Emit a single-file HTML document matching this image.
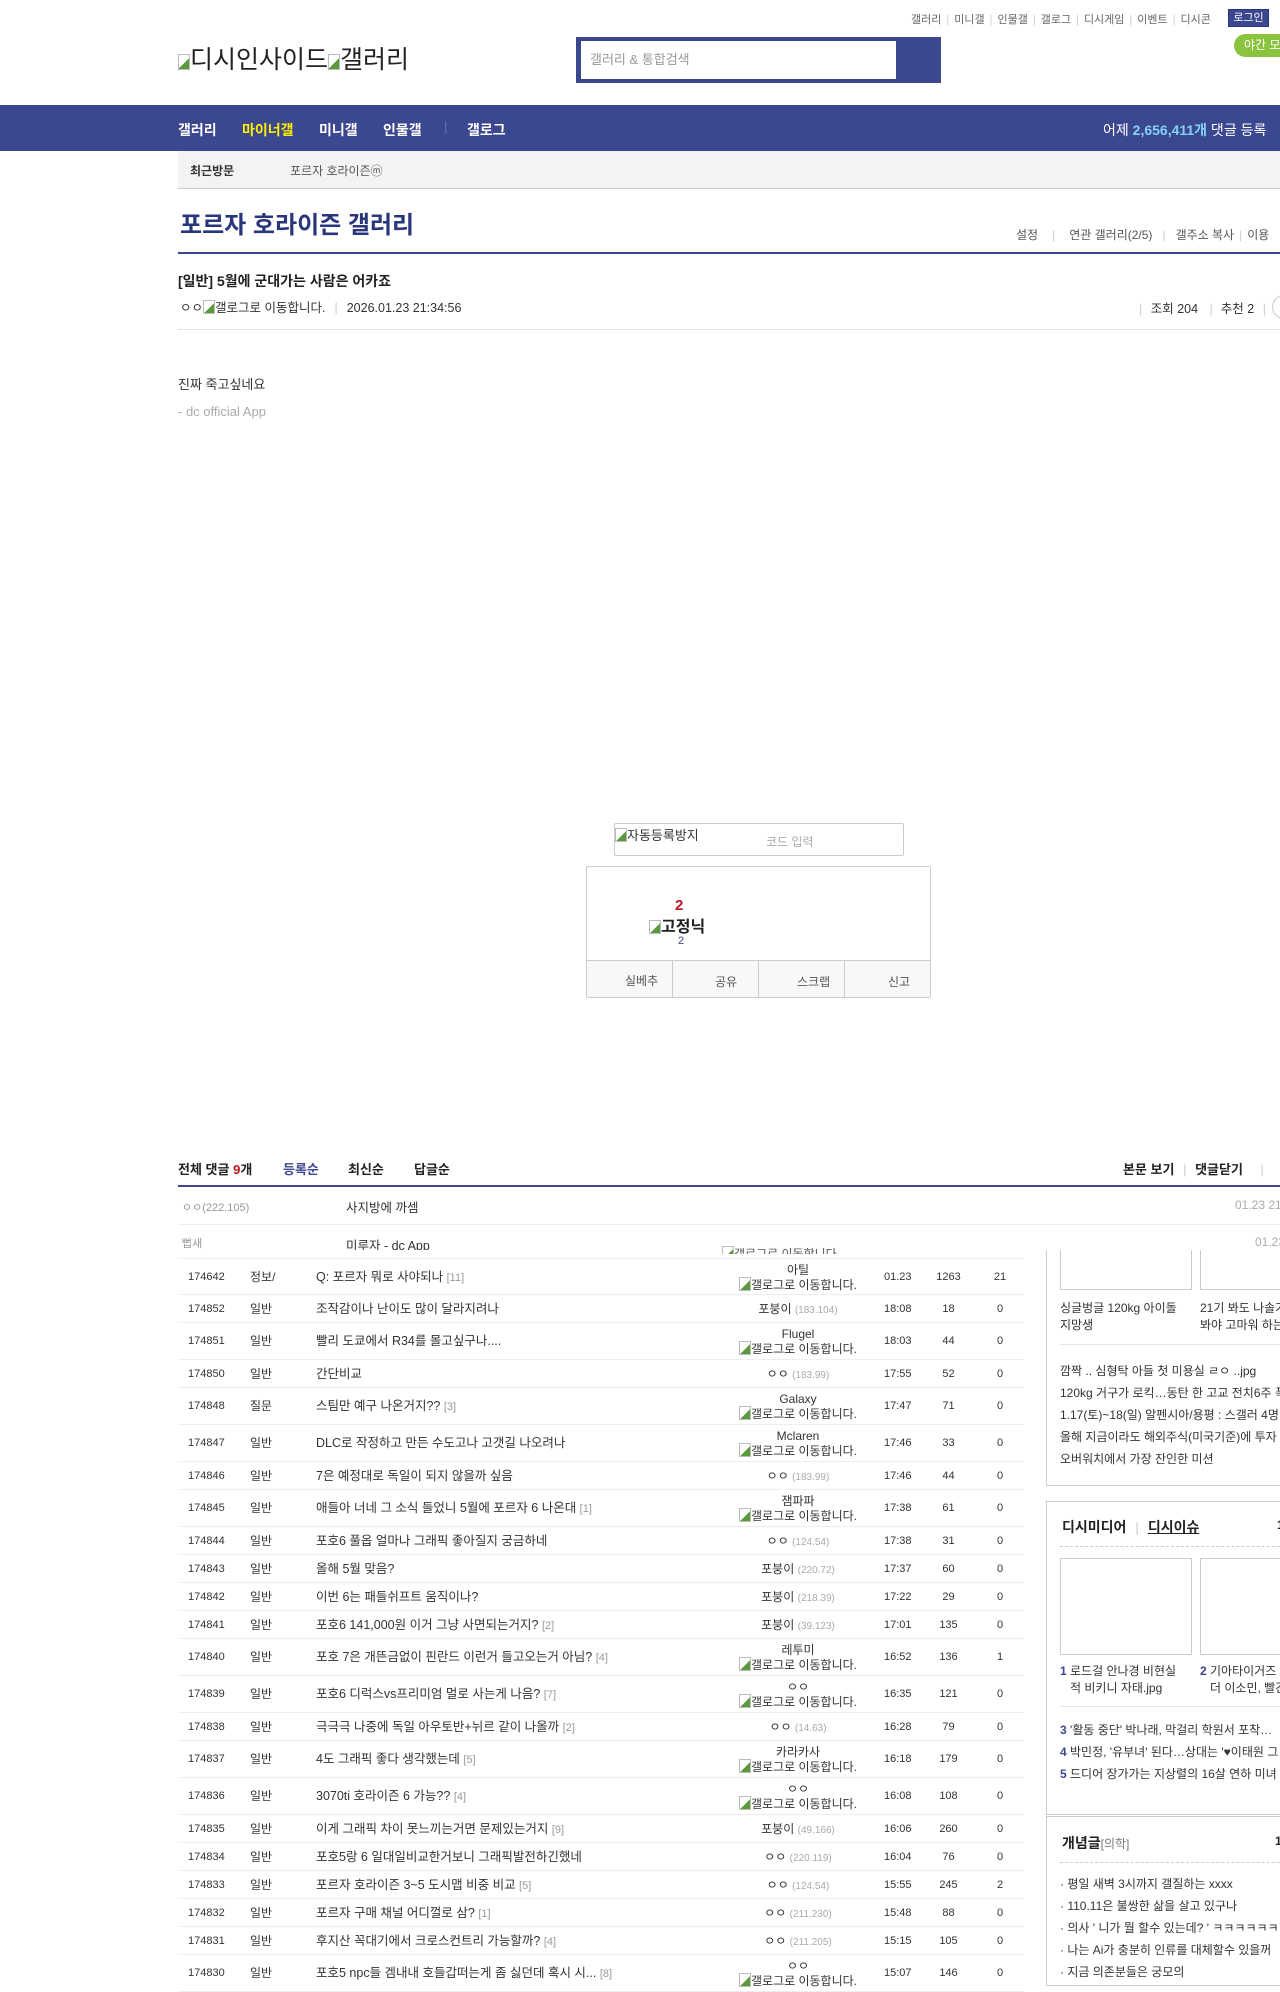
<!DOCTYPE html>
<html><head><meta charset="utf-8">
<style>
*{margin:0;padding:0;box-sizing:border-box}
body{width:1280px;height:1960px;position:relative;overflow:hidden;background:#fff;font-family:"Liberation Sans","Noto Sans CJK KR",sans-serif;color:#333;font-size:12px}
.a{position:absolute;white-space:nowrap}
.sep{color:#ccc;margin:0 5px}
.row{position:absolute;left:178px;width:846px;border-bottom:1px solid #eee;font-size:12px;color:#333}
.row>span{position:absolute;white-space:nowrap;line-height:14px}
.c1{left:10px;font-size:11px}
.c2{left:72px}
.c3{left:138px;font-size:12.5px}
.c4{left:545px;width:150px;text-align:center}
.c5{left:706px;font-size:11px}
.c6{left:748px;width:45px;text-align:center;font-size:11px}
.c7{left:802px;width:40px;text-align:center;font-size:11px}
.cnt{color:#999;font-size:11px}
.ip{color:#aaa;font-size:10px}
.img{display:inline-block;width:12px;height:14px;border:1px solid #bbb;vertical-align:-2px;background:linear-gradient(135deg,#fff 55%,#5a9a3a 55%)}
.box{position:absolute;left:1046px;width:260px;border:1px solid #ccc;background:#fff}
</style></head><body>

<div class="a" style="left:911px;top:11px;font-size:11px;color:#666">갤러리<span class="sep">|</span>미니갤<span class="sep">|</span>인물갤<span class="sep">|</span>갤로그<span class="sep">|</span>디시게임<span class="sep">|</span>이벤트<span class="sep">|</span>디시콘</div>
<div class="a" style="left:1228px;top:9px;width:41px;height:18px;background:#3b4890;border:1px solid #29367c;color:#fff;font-size:11px;text-align:center;line-height:16px">로그인</div>
<div class="a" style="left:1234px;top:34px;width:60px;height:23px;background:#8ac43f;border-radius:12px;color:#fff;font-size:12px;line-height:23px;padding-left:10px">야간 모드</div>

<div class="a" style="left:178px;top:40px;font-size:25px;color:#222"><span class="img" style="height:16px"></span>디시인사이드<span class="img" style="height:16px"></span>갤러리</div>
<div class="a" style="left:576px;top:37px;width:365px;height:46px;background:#3b4890"></div>
<div class="a" style="left:581px;top:41px;width:315px;height:38px;background:#fff;color:#999;font-size:13px;line-height:38px;padding-left:9px">갤러리 &amp; 통합검색</div>

<div class="a" style="left:0;top:105px;width:1280px;height:46px;background:#3b4890"></div>
<div class="a" style="left:178px;top:120px;font-size:14px;font-weight:bold;color:#fff">갤러리</div>
<div class="a" style="left:242px;top:120px;font-size:14px;font-weight:bold;color:#fff000">마이너갤</div>
<div class="a" style="left:319px;top:120px;font-size:14px;font-weight:bold;color:#fff">미니갤</div>
<div class="a" style="left:383px;top:120px;font-size:14px;font-weight:bold;color:#fff">인물갤</div>
<div class="a" style="left:444px;top:119px;font-size:13px;color:#6a76b0">|</div>
<div class="a" style="left:467px;top:120px;font-size:14px;font-weight:bold;color:#fff">갤로그</div>
<div class="a" style="left:1103px;top:120px;font-size:14px;color:#fff">어제 <b style="color:#83d3f7">2,656,411개</b> 댓글 등록</div>

<div class="a" style="left:178px;top:151px;width:1102px;height:38px;background:#f3f3f3;border-bottom:1px solid #ccc"></div>
<div class="a" style="left:190px;top:162px;font-size:12px;font-weight:bold;color:#333">최근방문</div>
<div class="a" style="left:290px;top:162px;font-size:12px;color:#555">포르자 호라이즌ⓜ</div>

<div class="a" style="left:180px;top:205px;font-size:24px;font-weight:bold;color:#29367c">포르자 호라이즌 갤러리</div>
<div class="a" style="left:1016px;top:226px;font-size:12px;color:#555">설정<span class="sep" style="margin:0 14px">|</span>연관 갤러리(2/5)<span class="sep" style="margin:0 10px">|</span>갤주소 복사<span class="sep">|</span>이용</div>
<div class="a" style="left:178px;top:252px;width:1102px;height:2px;background:#3b4890"></div>

<div class="a" style="left:178px;top:271px;font-size:14px;font-weight:bold;color:#222">[일반] 5월에 군대가는 사람은 어카죠</div>
<div class="a" style="left:180px;top:297px;font-size:12.5px;color:#333">ㅇㅇ<span class="img"></span>갤로그로 이동합니다.<span class="sep" style="margin:0 9px">|</span>2026.01.23 21:34:56</div>
<div class="a" style="left:1134px;top:298px;font-size:12.5px;color:#333"><span class="sep">|</span> 조회 204 <span class="sep" style="margin:0 8px">|</span>추천 2 <span class="sep">|</span></div>
<div class="a" style="left:1272px;top:295px;width:24px;height:24px;border:1px solid #ccc;border-radius:12px"></div>
<div class="a" style="left:178px;top:329px;width:1102px;height:1px;background:#e5e5e5"></div>

<div class="a" style="left:178px;top:374px;font-size:13px;color:#333">진짜 죽고싶네요</div>
<div class="a" style="left:178px;top:404px;font-size:13px;color:#aaa">- dc official App</div>

<div class="a" style="left:614px;top:823px;width:290px;height:33px;border:1px solid #ccc;border-radius:2px"></div>
<div class="a" style="left:615px;top:825px;font-size:13px;color:#333"><span class="img"></span>자동등록방지</div>
<div class="a" style="left:766px;top:833px;font-size:12px;color:#aaa">코드 입력</div>

<div class="a" style="left:586px;top:866px;width:345px;height:132px;border:1px solid #ccc;border-radius:2px"></div>
<div class="a" style="left:675px;top:897px;font-size:15px;font-weight:bold;color:#c1121f">2</div>
<div class="a" style="left:649px;top:913px;font-size:16px;font-weight:bold;color:#222"><span class="img"></span>고정닉</div>
<div class="a" style="left:678px;top:935px;font-size:11px;color:#3b4890">2</div>
<div class="a" style="left:587px;top:960px;width:343px;height:37px;background:#f8f8f8;border-top:1px solid #ccc"></div>
<div class="a" style="left:672px;top:960px;width:1px;height:37px;background:#ccc"></div>
<div class="a" style="left:758px;top:960px;width:1px;height:37px;background:#ccc"></div>
<div class="a" style="left:844px;top:960px;width:1px;height:37px;background:#ccc"></div>
<div class="a" style="left:625px;top:972px;font-size:12px;color:#555">실베추</div>
<div class="a" style="left:715px;top:973px;font-size:12px;color:#555">공유</div>
<div class="a" style="left:797px;top:973px;font-size:12px;color:#555">스크랩</div>
<div class="a" style="left:888px;top:973px;font-size:12px;color:#555">신고</div>

<div class="a" style="left:178px;top:1159px;font-size:13px;font-weight:bold;color:#222">전체 댓글 <span style="color:#c1121f">9</span>개</div>
<div class="a" style="left:283px;top:1159px;font-size:13px;font-weight:bold;color:#3b4890">등록순</div>
<div class="a" style="left:348px;top:1159px;font-size:13px;font-weight:bold;color:#222">최신순</div>
<div class="a" style="left:414px;top:1159px;font-size:13px;font-weight:bold;color:#222">답글순</div>
<div class="a" style="left:1123px;top:1159px;font-size:13px;font-weight:bold;color:#222">본문 보기 <span class="sep" style="font-weight:normal">|</span> 댓글닫기 <span class="sep" style="margin-left:14px;font-weight:normal">|</span></div>
<div class="a" style="left:178px;top:1185px;width:1102px;height:2px;background:#3b4890"></div>
<div class="a" style="left:182px;top:1199px;font-size:11px;color:#999">ㅇㅇ(222.105)</div>
<div class="a" style="left:346px;top:1197px;font-size:12.5px;color:#333">사지방에 까셈</div>
<div class="a" style="left:1235px;top:1198px;font-size:12px;color:#aaa">01.23 21</div>
<div class="a" style="left:178px;top:1224px;width:1102px;height:1px;background:#eee"></div>
<div class="a" style="left:182px;top:1235px;font-size:11px;color:#999">뻡새</div>
<div class="a" style="left:346px;top:1235px;font-size:12.5px;color:#333">미루자 - dc App</div>
<div class="a" style="left:1255px;top:1235px;font-size:12px;color:#aaa">01.23</div>

<div class="a" style="left:178px;top:1250px;width:846px;height:720px;background:#fff"></div>
<div class="a" style="left:722px;top:1246px;font-size:12px;color:#555;height:8px;overflow:hidden;line-height:4px"><span class="img"></span>갤로그로 이동합니다.</div>
<div class="row" style="top:1258px;height:37px;border-top:1px solid #eee"><span class="c1" style="top:11px">174642</span><span class="c2" style="top:11px">정보/</span><span class="c3" style="top:11px">Q: 포르자 뭐로 사야되나 <span class="cnt">[11]</span></span><span class="c4" style="top:4px">아틸<br><span class="img"></span>갤로그로 이동합니다.</span><span class="c5" style="top:11px">01.23</span><span class="c6" style="top:11px">1263</span><span class="c7" style="top:11px">21</span></div>
<div id="rows"></div>

<div class="box" style="top:1250px;height:236px;border-top:none">
  <div class="a" style="left:13px;top:0;width:132px;height:40px;border:1px solid #ccc;border-top:none"></div>
  <div class="a" style="left:153px;top:0;width:132px;height:40px;border:1px solid #ccc;border-top:none"></div>
  <div class="a" style="left:13px;top:50px;font-size:12px;line-height:17px;color:#333">싱글벙글 120kg 아이돌<br>지망생</div>
  <div class="a" style="left:153px;top:50px;font-size:12px;line-height:17px;color:#333">21기 봐도 나솔가<br>봐야 고마워 하는</div>
  <div class="a" style="left:13px;top:94px;width:250px;height:1px;background:#e5e5e5"></div>
  <div class="a" style="left:13px;top:110px;font-size:12px;line-height:22px;color:#333">깜짝 .. 심형탁 아들 첫 미용실 ㄹㅇ ..jpg<br>120kg 거구가 로킥…동탄 한 고교 전치6주 폭<br>1.17(토)~18(일) 알펜시아/용평 : 스갤러 4명<br>올해 지금이라도 해외주식(미국기준)에 투자<br>오버워치에서 가장 잔인한 미션</div>
</div>
<div class="box" style="top:1501px;height:314px">
  <div class="a" style="left:15px;top:15px;font-size:14px;font-weight:bold;color:#222">디시미디어 <span class="sep" style="font-weight:normal">|</span> <u>디시이슈</u></div>
  <div class="a" style="left:230px;top:16px;font-size:12px;font-weight:bold;color:#222">1/</div>
  <div class="a" style="left:13px;top:44px;width:250px;border-top:1px dashed #ccc"></div>
  <div class="a" style="left:13px;top:56px;width:132px;height:97px;border:1px solid #ccc"></div>
  <div class="a" style="left:153px;top:56px;width:132px;height:97px;border:1px solid #ccc"></div>
  <div class="a" style="left:13px;top:161px;font-size:12px;line-height:17px;color:#333"><b style="color:#3b4890">1</b> 로드걸 안나경 비현실<br>&nbsp;&nbsp;&nbsp;적 비키니 자태.jpg</div>
  <div class="a" style="left:153px;top:161px;font-size:12px;line-height:17px;color:#333"><b style="color:#3b4890">2</b> 기아타이거즈<br>&nbsp;&nbsp;&nbsp;더 이소민, 빨간</div>
  <div class="a" style="left:13px;top:204px;width:250px;height:1px;background:#e5e5e5"></div>
  <div class="a" style="left:13px;top:217px;font-size:12px;line-height:22px;color:#333"><b style="color:#3b4890">3</b> '활동 중단' 박나래, 막걸리 학원서 포착…<br><b style="color:#3b4890">4</b> 박민정, '유부녀' 된다…상대는 '♥이태원 그<br><b style="color:#3b4890">5</b> 드디어 장가가는 지상렬의 16살 연하 미녀</div>
</div>
<div class="box" style="top:1816px;height:170px">
  <div class="a" style="left:15px;top:16px;font-size:14px;font-weight:bold;color:#222">개념글<span style="font-weight:normal;font-size:12px;color:#777">[의학]</span></div>
  <div class="a" style="left:228px;top:17px;font-size:12px;font-weight:bold;color:#222">1/2</div>
  <div class="a" style="left:13px;top:45px;width:250px;border-top:1px dashed #ccc"></div>
  <div class="a" style="left:13px;top:56px;font-size:12px;line-height:22px;color:#333">· 평일 새벽 3시까지 갤질하는 xxxx<br>· 110.11은 불쌍한 삶을 살고 있구나<br>· 의사 ' 니가 뭘 할수 있는데? ' ㅋㅋㅋㅋㅋㅋ<br>· 나는 Ai가 충분히 인류를 대체할수 있을꺼<br>· 지금 의존분들은 궁모의</div>
</div>

<script>
var d=[
["174852","일반","조작감이나 난이도 많이 달라지려나","","포붕이","(183.104)","18:08","18","0"],
["174851","일반","빨리 도쿄에서 R34를 몰고싶구나....","","Flugel","","18:03","44","0"],
["174850","일반","간단비교","","ㅇㅇ","(183.99)","17:55","52","0"],
["174848","질문","스팀만 예구 나온거지??","[3]","Galaxy","","17:47","71","0"],
["174847","일반","DLC로 작정하고 만든 수도고나 고갯길 나오려나","","Mclaren","","17:46","33","0"],
["174846","일반","7은 예정대로 독일이 되지 않을까 싶음","","ㅇㅇ","(183.99)","17:46","44","0"],
["174845","일반","애들아 너네 그 소식 들었니 5월에 포르자 6 나온대","[1]","잼파파","","17:38","61","0"],
["174844","일반","포호6 풀옵 얼마나 그래픽 좋아질지 궁금하네","","ㅇㅇ","(124.54)","17:38","31","0"],
["174843","일반","올해 5월 맞음?","","포붕이","(220.72)","17:37","60","0"],
["174842","일반","이번 6는 패들쉬프트 움직이나?","","포붕이","(218.39)","17:22","29","0"],
["174841","일반","포호6 141,000원 이거 그냥 사면되는거지?","[2]","포붕이","(39.123)","17:01","135","0"],
["174840","일반","포호 7은 개뜬금없이 핀란드 이런거 들고오는거 아님?","[4]","레투미","","16:52","136","1"],
["174839","일반","포호6 디럭스vs프리미엄 멀로 사는게 나음?","[7]","ㅇㅇ","","16:35","121","0"],
["174838","일반","극극극 나중에 독일 아우토반+뉘르 같이 나올까","[2]","ㅇㅇ","(14.63)","16:28","79","0"],
["174837","일반","4도 그래픽 좋다 생각했는데","[5]","카라카사","","16:18","179","0"],
["174836","일반","3070ti 호라이즌 6 가능??","[4]","ㅇㅇ","","16:08","108","0"],
["174835","일반","이게 그래픽 차이 못느끼는거면 문제있는거지","[9]","포붕이","(49.166)","16:06","260","0"],
["174834","일반","포호5랑 6 일대일비교한거보니 그래픽발전하긴했네","","ㅇㅇ","(220.119)","16:04","76","0"],
["174833","일반","포르자 호라이즌 3~5 도시맵 비중 비교","[5]","ㅇㅇ","(124.54)","15:55","245","2"],
["174832","일반","포르자 구매 채널 어디껄로 삼?","[1]","ㅇㅇ","(211.230)","15:48","88","0"],
["174831","일반","후지산 꼭대기에서 크로스컨트리 가능할까?","[4]","ㅇㅇ","(211.205)","15:15","105","0"],
["174830","일반","포호5 npc들 겜내내 호들갑떠는게 좀 싫던데 혹시 시...","[8]","ㅇㅇ","","15:07","146","0"]];
var y=1295,h="";
d.forEach(function(r){
 var dbl=r[5]==="";var ht=dbl?37:28;var t=dbl?11:7;
 var w=dbl?(r[4]+'<br><span class="img"></span>갤로그로 이동합니다.'):(r[4]+' <span class="ip">'+r[5]+'</span>');
 h+='<div class="row" style="top:'+y+'px;height:'+ht+'px"><span class="c1" style="top:'+t+'px">'+r[0]+'</span><span class="c2" style="top:'+t+'px">'+r[1]+'</span><span class="c3" style="top:'+t+'px">'+r[2]+' <span class="cnt">'+r[3]+'</span></span><span class="c4" style="top:'+(dbl?4:t)+'px">'+w+'</span><span class="c5" style="top:'+t+'px">'+r[6]+'</span><span class="c6" style="top:'+t+'px">'+r[7]+'</span><span class="c7" style="top:'+t+'px">'+r[8]+'</span></div>';
 y+=ht;});
document.getElementById("rows").outerHTML=h;
</script>
</body></html>
